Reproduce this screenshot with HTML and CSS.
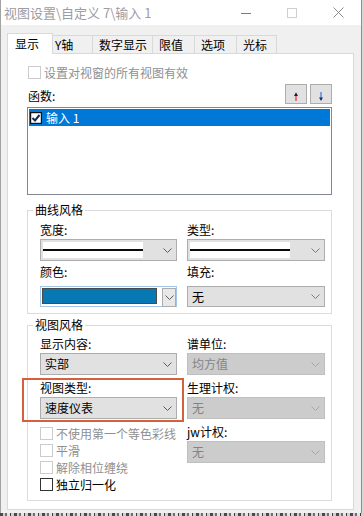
FILE: index.html
```html
<!DOCTYPE html>
<html lang="zh">
<head>
<meta charset="utf-8">
<title>视图设置</title>
<link rel="stylesheet" href="styles.css">
</head>
<body>
<div class="window">
  <div class="titlebar">
    <span class="title">视图设置\自定义 7\输入 1</span>
    <div class="controls">
      <span class="ctl"><svg width="10" height="10" viewBox="0 0 10 10"><line x1="0" y1="5.5" x2="10" y2="5.5" stroke="#7a7a7a" stroke-width="1"/></svg></span>
      <span class="ctl"><svg width="10" height="10" viewBox="0 0 10 10"><rect x="0.5" y="0.5" width="9" height="9" fill="none" stroke="#cfcfcf" stroke-width="1"/></svg></span>
      <span class="ctl"><svg width="11" height="11" viewBox="0 0 11 11"><path d="M0.5 0.5 L10.5 10.5 M10.5 0.5 L0.5 10.5" stroke="#8a8a8a" stroke-width="1" fill="none"/></svg></span>
    </div>
  </div>
  <div class="client">
    <div class="tabs">
      <div class="tab active">显示</div>
      <div class="tab tab-y">Y轴</div>
      <div class="tab tab-num">数字显示</div>
      <div class="tab tab-lim">限值</div>
      <div class="tab tab-opt">选项</div>
      <div class="tab tab-cur">光标</div>
    </div>
    <div class="panel">
      <div class="chk disabled top-chk"><span class="box"></span><span>设置对视窗的所有视图有效</span></div>
      <div class="func-row">
        <span class="func-lbl">函数:</span>
        <div class="btns">
          <span class="abtn"><svg width="20" height="18" viewBox="0 0 20 18"><line x1="10" y1="8.5" x2="10" y2="16" stroke="#d8434c" stroke-width="1.3"/><path d="M8 11 L10 7.5 L12 11 Z" fill="#1d1d3a"/></svg></span>
          <span class="abtn"><svg width="20" height="18" viewBox="0 0 20 18"><line x1="10" y1="7" x2="10" y2="14.5" stroke="#4f79cf" stroke-width="1.3"/><path d="M8 12.5 L10 16 L12 12.5 Z" fill="#14306e"/></svg></span>
        </div>
      </div>
      <div class="listbox">
        <div class="item sel">
          <svg class="item-chk" width="12" height="12" viewBox="0 0 12 12"><rect x="0.5" y="0.5" width="11" height="11" fill="#fff" stroke="#111" stroke-width="1.4"/><path d="M2.5 6 L5 8.5 L9.5 3" fill="none" stroke="#0e2a55" stroke-width="2"/></svg>
          <span>输入 1</span>
        </div>
      </div>

      <fieldset class="group g1">
        <legend>曲线风格</legend>
        <div class="gcols">
          <div class="col">
            <div class="lbl">宽度:</div>
            <div class="combo"><span class="line-sw"></span><svg class="chev" width="9" height="5" viewBox="0 0 9 5"><polyline points="0.5,0.5 4.5,4.5 8.5,0.5" fill="none" stroke="#5c5c5c"/></svg></div>
            <div class="lbl">颜色:</div>
            <div class="combo color second">
              <span class="swatch"></span>
              <span class="dd-btn"><svg width="9" height="5" viewBox="0 0 9 5"><polyline points="0.5,0.5 4.5,4.5 8.5,0.5" fill="none" stroke="#5c5c5c"/></svg></span>
            </div>
          </div>
          <div class="col">
            <div class="lbl">类型:</div>
            <div class="combo"><span class="line-sw"></span><svg class="chev" width="9" height="5" viewBox="0 0 9 5"><polyline points="0.5,0.5 4.5,4.5 8.5,0.5" fill="none" stroke="#7a7a7a"/></svg></div>
            <div class="lbl">填充:</div>
            <div class="combo second"><span class="val">无</span><svg class="chev" width="9" height="5" viewBox="0 0 9 5"><polyline points="0.5,0.5 4.5,4.5 8.5,0.5" fill="none" stroke="#7a7a7a"/></svg></div>
          </div>
        </div>
      </fieldset>

      <fieldset class="group g2">
        <legend>视图风格</legend>
        <div class="gcols">
          <div class="col">
            <div class="lbl first">显示内容:</div>
            <div class="combo"><span class="val">实部</span><svg class="chev" width="9" height="5" viewBox="0 0 9 5"><polyline points="0.5,0.5 4.5,4.5 8.5,0.5" fill="none" stroke="#5c5c5c"/></svg></div>
            <div class="lbl gap">视图类型:</div>
            <div class="combo"><span class="val">速度仪表</span><svg class="chev" width="9" height="5" viewBox="0 0 9 5"><polyline points="0.5,0.5 4.5,4.5 8.5,0.5" fill="none" stroke="#5c5c5c"/></svg></div>
            <div class="checks">
              <div class="chk disabled"><span class="box"></span><span>不使用第一个等色彩线</span></div>
              <div class="chk disabled"><span class="box"></span><span>平滑</span></div>
              <div class="chk disabled"><span class="box"></span><span>解除相位缠绕</span></div>
              <div class="chk"><span class="box"></span><span>独立归一化</span></div>
            </div>
          </div>
          <div class="col">
            <div class="lbl first">谱单位:</div>
            <div class="combo disabled"><span class="val">均方值</span><svg class="chev" width="9" height="5" viewBox="0 0 9 5"><polyline points="0.5,0.5 4.5,4.5 8.5,0.5" fill="none" stroke="#a8a8a8"/></svg></div>
            <div class="lbl gap">生理计权:</div>
            <div class="combo disabled"><span class="val">无</span><svg class="chev" width="9" height="5" viewBox="0 0 9 5"><polyline points="0.5,0.5 4.5,4.5 8.5,0.5" fill="none" stroke="#a8a8a8"/></svg></div>
            <div class="lbl gap">jw计权:</div>
            <div class="combo disabled"><span class="val">无</span><svg class="chev" width="9" height="5" viewBox="0 0 9 5"><polyline points="0.5,0.5 4.5,4.5 8.5,0.5" fill="none" stroke="#a8a8a8"/></svg></div>
          </div>
        </div>
      </fieldset>
    </div>
  </div>
  <div class="highlight"></div>
</div>
<div class="bottom-edge"></div>
</body>
</html>
```

FILE: styles.css
```css
* { box-sizing: border-box; }
html, body { margin: 0; padding: 0; }
body {
  width: 363px;
  height: 516px;
  overflow: hidden;
  background: #d8d8d8;
  font-family: "Noto Sans CJK SC", "Noto Sans", "Liberation Sans", sans-serif;
  font-size: 12px;
  color: #000;
}
.window {
  position: relative;
  width: 362px;
  height: 513px;
  background: #f0f0f0;
  border-left: 1px solid #a3a3a3;
  border-right: 1px solid #8e8e8e;
  display: flex;
  flex-direction: column;
}
.titlebar {
  height: 25px;
  flex: 0 0 25px;
  background: #fff;
  display: flex;
  align-items: center;
  justify-content: space-between;
  padding-left: 3px;
}
.title {
  font-size: 13px;
  color: #9c9ca4;
  line-height: 25px;
  white-space: pre;
}
.controls { display: flex; height: 25px; }
.ctl {
  width: 46px;
  display: flex;
  align-items: center;
  justify-content: center;
}
.client { padding: 8px 0 0 6px; }
.tabs { display: flex; align-items: flex-end; height: 20px; }
.tab {
  height: 18px;
  line-height: 17px;
  border-top: 1px solid #d9d9d9;
  border-right: 1px solid #d9d9d9;
  background: #f0f0f0;
  padding-left: 6px;
  white-space: nowrap;
}
.tab.active {
  width: 46px;
  height: 21px;
  margin-bottom: -1px;
  line-height: 20px;
  background: #fff;
  border-left: 1px solid #d9d9d9;
  padding-left: 7px;
  position: relative;
  z-index: 1;
}
.tab-y { width: 40px; padding-left: 2px; }
.tab-num { width: 60px; }
.tab-lim { width: 42px; }
.tab-opt { width: 42px; }
.tab-cur { width: 40px; }

.panel {
  width: 347px;
  height: 457px;
  background: #fff;
  border: 1px solid #d9d9d9;
  padding: 12px 21px 0 19px;
  display: flex;
  flex-direction: column;
}
.chk {
  display: flex;
  align-items: center;
  gap: 3px;
  height: 17px;
  line-height: 17px;
  white-space: nowrap;
}
.chk .box {
  width: 13px;
  height: 13px;
  flex: 0 0 13px;
  border: 1px solid #333;
  background: #fff;
}
.chk.disabled { color: #8f8f8f; }
.chk.disabled .box { border-color: #cccccc; }
.top-chk { height: 13px; margin-left: 1px; }

.func-row {
  margin-top: 5px;
  height: 20px;
  display: flex;
  justify-content: space-between;
  align-items: flex-end;
}
.func-lbl { padding-left: 1px; line-height: 16px; }
.btns { display: flex; gap: 3px; }
.abtn {
  width: 22px;
  height: 20px;
  border: 1px solid #adadad;
  background: #e1e1e1;
  display: flex;
}
.listbox {
  margin-top: 3px;
  height: 88px;
  border: 1px solid #828790;
  padding: 1px 1px;
}
.item {
  height: 17px;
  display: flex;
  align-items: center;
  gap: 4px;
  padding-left: 1px;
  line-height: 17px;
}
.item.sel { background: #0078d7; color: #fff; }
.item-chk { flex: 0 0 12px; }

.group {
  margin: 6px 0 0 0;
  padding: 0;
  border: 1px solid #dcdcdc;
  min-width: 0;
}
.group legend {
  margin-left: 5px;
  padding: 0 2px;
  line-height: 18px;
  font-size: 12px;
}
.g2 { margin-top: 2px; }
.gcols {
  display: grid;
  grid-template-columns: 137px 138px;
  column-gap: 10px;
  padding: 0 0 6px 12px;
}
.g2 .gcols { padding-bottom: 7px; }
.col { display: flex; flex-direction: column; }
.lbl { line-height: 18px; height: 18px; margin-top: 2px; white-space: nowrap; }
.lbl.first { margin-top: 1px; }
.lbl.gap { margin-top: 4px; }

.combo {
  height: 22px;
  border: 1px solid #adadad;
  background: #e1e1e1;
  display: flex;
  align-items: center;
  justify-content: space-between;
  padding: 0 4px 0 2px;
}
.combo.second { margin-top: 5px; height: 21px; }
.combo .val { padding-left: 2px; line-height: 20px; }
.combo.disabled { background: #cccccc; border-color: #bfbfbf; color: #848484; }
.line-sw {
  width: 100px;
  height: 16px;
  background: #fff;
  display: flex;
  align-items: center;
}
.line-sw::after {
  content: "";
  display: block;
  width: 100%;
  height: 2px;
  background: #0a0a0a;
}
.combo.color {
  border-color: #a4c6e8;
  background: #fff;
  padding: 1px 0 0 1px;
  align-items: stretch;
  justify-content: flex-start;
}
.swatch {
  width: 116px;
  height: 16px;
  background: #0679b4;
  border: 1px solid #4a4a4a;
}
.dd-btn {
  width: 14px;
  margin-left: 5px;
  height: 19px;
  border: 1px solid #adadad;
  background: #e8e8e8;
  display: flex;
  align-items: center;
  justify-content: center;
}
.checks { margin-top: 6px; display: flex; flex-direction: column; }

.highlight {
  position: absolute;
  left: 21px;
  top: 378px;
  width: 162px;
  height: 44px;
  border: 2px solid #d5603c;
}
.bottom-edge {
  height: 3px;
  background: repeating-linear-gradient(90deg, #4a4a4a 0 3px, #cfcfcf 3px 5px, #707070 5px 7px, #e4e4e4 7px 10px, #3c3c3c 10px 11px, #d0d0d0 11px 14px);
}
```
